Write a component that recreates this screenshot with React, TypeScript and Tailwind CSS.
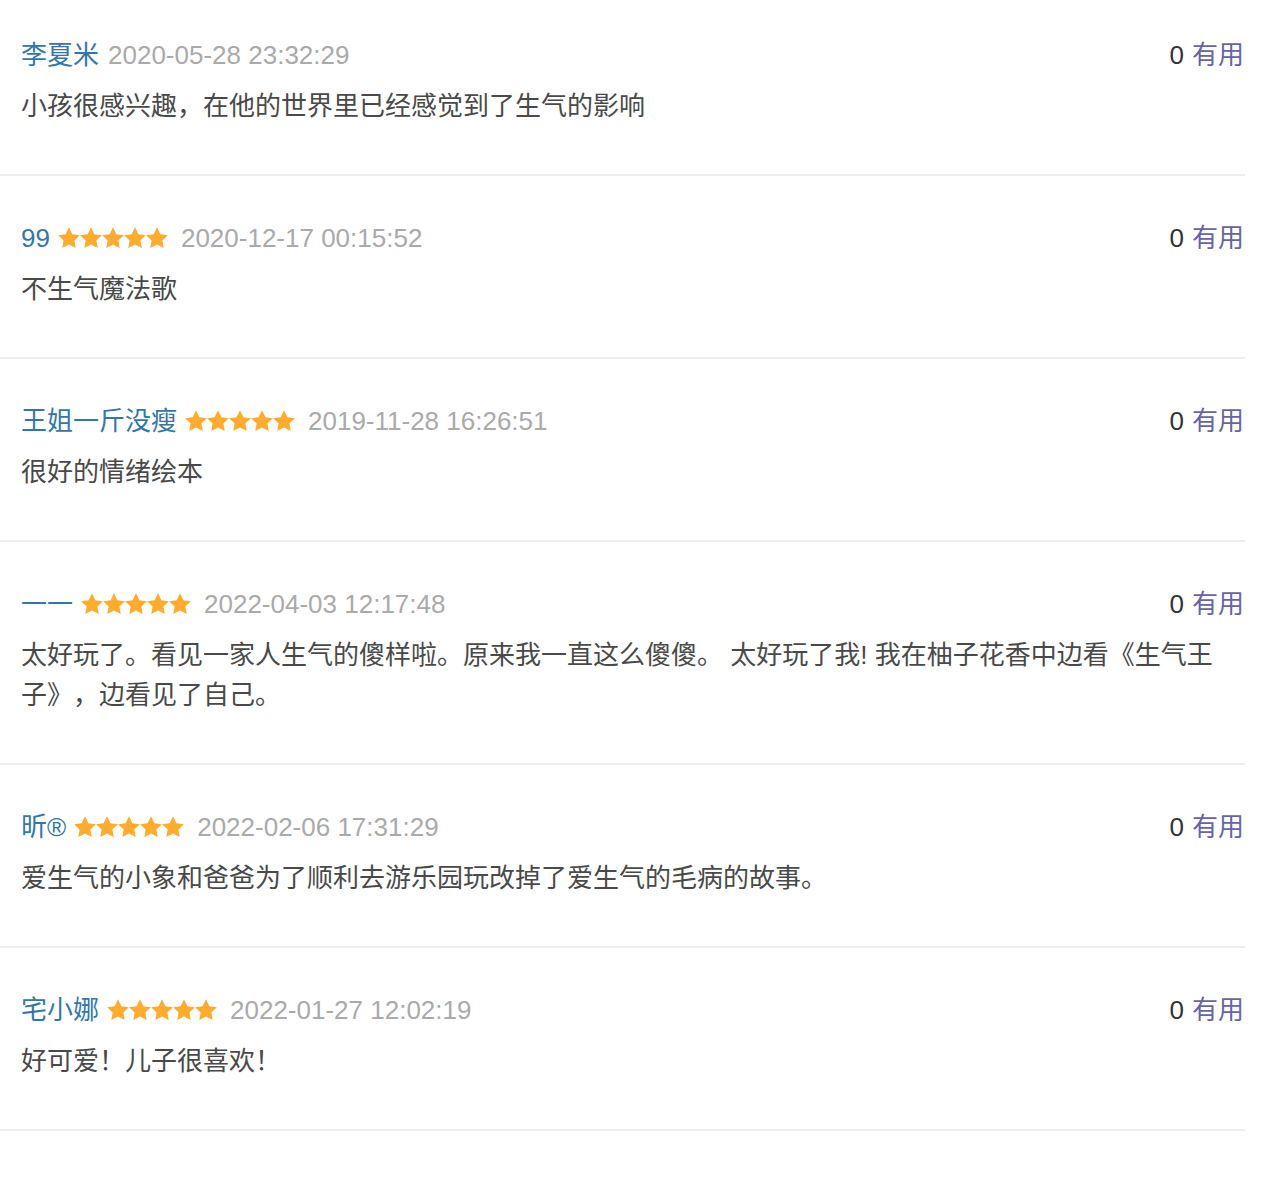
const comments = [
  { name: "李夏米", stars: 0, time: "2020-05-28 23:32:29", text: "小孩很感兴趣，在他的世界里已经感觉到了生气的影响" },
  { name: "99", stars: 5, time: "2020-12-17 00:15:52", text: "不生气魔法歌" },
  { name: "王姐一斤没瘦", stars: 5, time: "2019-11-28 16:26:51", text: "很好的情绪绘本" },
  {
    name: "一一",
    stars: 5,
    time: "2022-04-03 12:17:48",
    text: "太好玩了。看见一家人生气的傻样啦。原来我一直这么傻傻。 太好玩了我! 我在柚子花香中边看《生气王子》，边看见了自己。",
  },
  { name: "昕®", stars: 5, time: "2022-02-06 17:31:29", text: "爱生气的小象和爸爸为了顺利去游乐园玩改掉了爱生气的毛病的故事。" },
  { name: "宅小娜", stars: 5, time: "2022-01-27 12:02:19", text: "好可爱！儿子很喜欢！" },
];

function Star() {
  return (
    <svg width="22" height="22" viewBox="0 0 24 24" className="block">
      <path
        d="M12 .4l3.7 7.4 8.1 1.2-5.9 5.7 1.4 8.1L12 19l-7.3 3.8 1.4-8.1L.2 9l8.1-1.2z"
        fill="#ffac2d"
      />
    </svg>
  );
}

export default function App() {
  return (
    <div
      className="w-[1245px] bg-white text-[26px] [text-spacing-trim:space-all]"
      style={{ fontFamily: '"Liberation Sans", "Noto Sans CJK SC", sans-serif' }}
    >
      {comments.map((c, i) => (
        <div
          key={i}
          className={`border-b-2 border-[#eeeeee] pl-[21px] pr-[1px] pb-[48px] ${i === 0 ? "pt-[35px]" : "pt-[42px]"}`}
        >
          <div className="flex items-center justify-between h-[40px] leading-[40px]">
            <div className="flex items-center">
              <span className="text-[#3377aa]">{c.name}</span>
              {c.stars > 0 && (
                <span className="flex ml-[8px]">
                  {Array.from({ length: c.stars }).map((_, k) => (
                    <Star key={k} />
                  ))}
                </span>
              )}
              <span className={`text-[#aaaaaa] ${c.stars > 0 ? "ml-[13px]" : "ml-[9px]"}`}>{c.time}</span>
            </div>
            <div>
              <span className="text-[#333333]">0</span>
              <span className="ml-[8px] text-[#6565a5]">有用</span>
            </div>
          </div>
          <p className="mt-[11px] leading-[40px] text-[#494949]">{c.text}</p>
        </div>
      ))}
    </div>
  );
}
